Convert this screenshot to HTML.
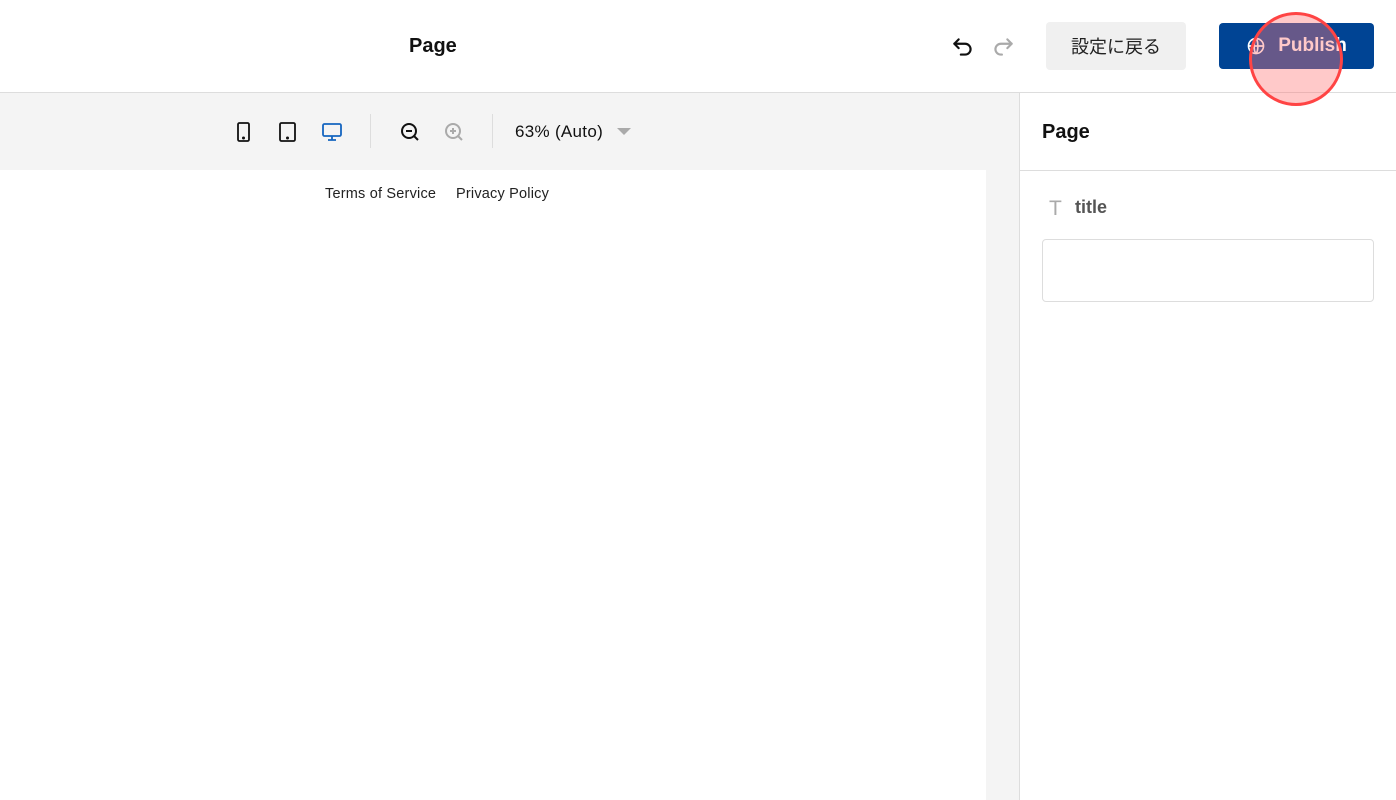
<!DOCTYPE html>
<html><head><meta charset="utf-8"><style>
*{box-sizing:border-box;margin:0;padding:0}
body{width:1396px;height:800px;overflow:hidden;background:#fff;font-family:"Liberation Sans","Noto Sans CJK JP",sans-serif;position:relative}
.a{position:absolute}
</style></head><body>
<div class="a" style="left:0;top:0;width:1396px;height:93px;background:#fff;border-bottom:1px solid #ddd"></div>
<div class="a" style="left:409px;top:35px;font-size:20px;font-weight:bold;color:#111">Page</div>
<svg class="a" style="left:950px;top:34px" width="26" height="26" viewBox="0 0 24 24" fill="none" stroke="#111" stroke-width="2" stroke-linecap="round" stroke-linejoin="round"><path d="M8 5L4 9l4 4"/><path d="M4 9h10a5 5 0 0 1 0 10h-4"/></svg>
<svg class="a" style="left:990px;top:34px" width="26" height="26" viewBox="0 0 24 24" fill="none" stroke="#aaa" stroke-width="2" stroke-linecap="round" stroke-linejoin="round"><path d="M16 5l4 4-4 4"/><path d="M20 9H10a5 5 0 0 0 0 10h1"/></svg>
<div class="a" style="left:1046px;top:22px;width:140px;height:48px;background:#f0f0f0;border-radius:4px;font-size:18px;color:#222;display:flex;align-items:center;justify-content:center">設定に戻る</div>
<div class="a" style="left:1219px;top:23px;width:155px;height:46px;background:#004494;border-radius:4px;display:flex;align-items:center;justify-content:center;color:#fff;font-size:19px;font-weight:bold"><svg width="20" height="20" viewBox="0 0 24 24" fill="none" stroke="#fff" stroke-width="2" style="margin-right:12px"><circle cx="12" cy="12" r="9"/><path d="M3 12h18M12 3c3 3 3 15 0 18M12 3c-3 3-3 15 0 18"/></svg>Publish</div>
<div class="a" style="left:1249px;top:12px;width:94px;height:94px;border-radius:50%;border:3px solid #f44;background:rgba(255,120,120,0.4)"></div>
<div class="a" style="left:0;top:93px;width:1019px;height:77px;background:#f4f4f4"></div>
<svg class="a" style="left:232px;top:120px" width="24" height="24" viewBox="0 0 24 24" fill="none" stroke="#111" stroke-width="1.8"><rect x="6" y="3" width="11" height="18" rx="1.5"/><circle cx="11.5" cy="18" r=".6" fill="#111"/></svg>
<svg class="a" style="left:276px;top:120px" width="24" height="24" viewBox="0 0 24 24" fill="none" stroke="#111" stroke-width="1.8"><rect x="4" y="3" width="15" height="18" rx="1.5"/><circle cx="11.5" cy="18" r=".6" fill="#111"/></svg>
<svg class="a" style="left:320px;top:120px" width="24" height="24" viewBox="0 0 24 24" fill="none" stroke="#1565c0" stroke-width="1.8"><rect x="3" y="4" width="18" height="12" rx="1.5"/><path d="M12 16v4M8 20h8"/></svg>
<div class="a" style="left:370px;top:114px;width:1px;height:34px;background:#ddd"></div>
<svg class="a" style="left:398px;top:120px" width="24" height="24" viewBox="0 0 24 24" fill="none" stroke="#111" stroke-width="2"><circle cx="11" cy="11" r="7"/><path d="M8 11h6M16 16l4 4"/></svg>
<svg class="a" style="left:442px;top:120px" width="24" height="24" viewBox="0 0 24 24" fill="none" stroke="#aaa" stroke-width="2"><circle cx="11" cy="11" r="7"/><path d="M8 11h6M11 8v6M16 16l4 4"/></svg>
<div class="a" style="left:492px;top:114px;width:1px;height:34px;background:#ddd"></div>
<div class="a" style="left:515px;top:122px;font-size:17px;color:#111;letter-spacing:0.3px">63% (Auto)</div>
<div class="a" style="left:617px;top:128px;width:0;height:0;border-left:7px solid transparent;border-right:7px solid transparent;border-top:7px solid #aaa"></div>
<div class="a" style="left:986px;top:170px;width:33px;height:630px;background:#f4f4f4"></div>
<div class="a" style="left:325px;top:186px;font-size:14.5px;color:#222;letter-spacing:0.2px">Terms of Service</div>
<div class="a" style="left:456px;top:186px;font-size:14.5px;color:#222;letter-spacing:0.2px">Privacy Policy</div>
<div class="a" style="left:1019px;top:93px;width:1px;height:707px;background:#ddd"></div>
<div class="a" style="left:1042px;top:121px;font-size:20px;font-weight:bold;color:#111">Page</div>
<div class="a" style="left:1020px;top:170px;width:376px;height:1px;background:#ddd"></div>
<div class="a" style="left:1049px;top:197px;font-size:21px;color:#aaa;font-family:'Liberation Sans',sans-serif;font-weight:300">T</div>
<div class="a" style="left:1075px;top:197px;font-size:18px;font-weight:bold;color:#555">title</div>
<div class="a" style="left:1042px;top:239px;width:332px;height:63px;border:1px solid #ddd;border-radius:4px"></div>
</body></html>
